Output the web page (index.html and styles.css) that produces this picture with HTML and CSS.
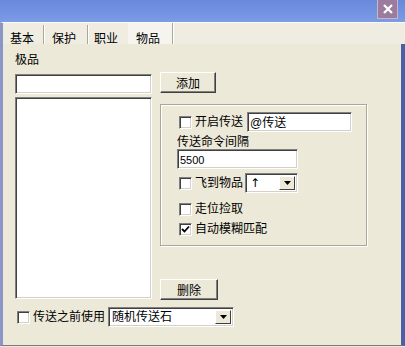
FILE: index.html
```html
<!DOCTYPE html>
<html lang="zh">
<head>
    <meta charset="UTF-8">
    <title>物品</title>
    <link rel="stylesheet" href="styles.css">
</head>
<body>

<div class="window">
    <div class="titlebar">
        <span class="close-btn">
            <svg width="14" height="12" viewBox="0 0 14 12"><path d="M3 2 L11 10 M11 2 L3 10" stroke="#fff" stroke-width="2.2"/></svg>
        </span>
    </div>

    <div class="tabs">
        <span class="tab tab-1">基本</span>
        <span class="tab tab-2">保护</span>
        <span class="tab tab-3">职业</span>
        <span class="tab tab-4 active">物品</span>
    </div>

    <div class="panel">
        <div class="label">极品</div>

        <div class="main">
            <div class="left-col">
                <div class="edit item-input"></div>
                <div class="edit item-list"></div>
            </div>

            <div class="right-col">
                <button class="btn btn-add">添加</button>

                <div class="group">
                    <div class="row">
                        <span class="check"></span>
                        <span class="check-text">开启传送</span>
                        <div class="edit cmd-input">@传送</div>
                    </div>
                    <div class="sub-label">传送命令间隔</div>
                    <div class="edit interval-input">5500</div>
                    <div class="row row-fly">
                        <span class="check"></span>
                        <span class="check-text">飞到物品</span>
                        <div class="combo fly-combo">
                            <span class="combo-value arrow-value">&#x2191;&#xFE0E;</span>
                            <span class="combo-arrow"><svg width="7" height="4" viewBox="0 0 7 4"><path d="M0 0 H7 L3.5 4 Z" fill="#000"/></svg></span>
                        </div>
                    </div>
                    <div class="row row-walk">
                        <span class="check"></span>
                        <span class="check-text">走位捡取</span>
                    </div>
                    <div class="row">
                        <span class="check">
                            <svg width="9" height="9" viewBox="0 0 9 9"><path d="M1 4 L3.5 6.5 L8 1.5" stroke="#000" stroke-width="1.8" fill="none"/></svg>
                        </span>
                        <span class="check-text">自动模糊匹配</span>
                    </div>
                </div>

                <button class="btn btn-delete">删除</button>
            </div>
        </div>

        <div class="bottom-row">
            <span class="check"></span>
            <span class="check-text">传送之前使用</span>
            <div class="combo stone-combo">
                <span class="combo-value">随机传送石</span>
                <span class="combo-arrow"><svg width="7" height="4" viewBox="0 0 7 4"><path d="M0 0 H7 L3.5 4 Z" fill="#000"/></svg></span>
            </div>
        </div>
    </div>
</div>

</body>
</html>
```

FILE: styles.css
```css
body {
    margin: 0;
    background: #ece9d8;
    font-family: "Liberation Sans", "Noto Sans CJK SC", sans-serif;
    font-size: 12px;
    color: #000;
}

.window {
    width: 405px;
    height: 346px;
    display: flex;
    flex-direction: column;
}

.titlebar {
    height: 22px;
    flex: none;
    background: linear-gradient(#6888dc, #7c9ce6);
    display: flex;
    justify-content: flex-end;
    align-items: flex-start;
    padding-right: 7px;
}

.close-btn {
    width: 19px;
    height: 18px;
    background: #9c7c9c;
    border: 1px solid #c8b4cc;
    border-top: none;
    display: flex;
    align-items: center;
    justify-content: center;
}

.tabs {
    height: 22px;
    flex: none;
    display: flex;
    background: #efece2;
    border-top: 1px solid #fbfaf6;
    border-left: 3px solid #8a96c6;
    box-sizing: border-box;
}

.tab {
    padding-top: 7px;
    line-height: 14px;
    border-right: 1px solid #aca899;
    box-shadow: 1px 0 0 #fff;
    margin-top: 2px;
}
.tab-1 { padding-left: 7px; width: 33px; }
.tab-2 { padding-left: 8px; width: 35px; }
.tab-3 { padding-left: 6px; width: 34px; border-right: none; box-shadow: none; }
.tab-4 { padding-left: 8px; width: 36px; }

.tab.active {
    background: #f6f4ee;
    margin-top: 0;
    padding-top: 9px;
}

.panel {
    flex: 1;
    border-left: 3px solid #8a96c6;
    border-right: 4px solid #4c5ea8;
    border-bottom: 1px solid #7a7a7a;
    padding: 9px 0 0 12px;
}

.label {
    height: 14px;
    line-height: 14px;
    margin-bottom: 6px;
}

.main {
    display: flex;
    gap: 8px;
}

.left-col {
    width: 137px;
    display: flex;
    flex-direction: column;
    gap: 3px;
    margin-top: 1px;
}

.edit {
    background: #fff;
    border: 1px solid;
    border-color: #808080 #fff #fff #808080;
    box-shadow: inset 1px 1px #404040, inset -1px -1px #d4d0c8;
    box-sizing: border-box;
    line-height: 16px;
    padding: 2px 2px 0;
    white-space: nowrap;
}

.item-input { height: 20px; }
.item-list { height: 202px; }

.right-col {
    width: 207px;
    display: flex;
    flex-direction: column;
    align-items: flex-start;
}

.btn {
    font: inherit;
    color: #000;
    background: #ece9d8;
    border: 1px solid;
    border-color: #fff #404040 #404040 #fff;
    box-shadow: inset -1px -1px #808080;
    height: 21px;
    padding: 0;
}
.btn-add { width: 56px; margin-top: -1px; }
.btn-delete { width: 58px; margin-top: 33px; }

.group {
    width: 207px;
    height: 142px;
    box-sizing: border-box;
    margin-top: 11px;
    border: 1px solid #aca899;
    box-shadow: inset 1px 1px #fff, 1px 1px #fff;
    padding: 7px 0 0 16px;
}

.row {
    height: 20px;
    display: flex;
    align-items: center;
}

.check {
    width: 13px;
    height: 13px;
    box-sizing: border-box;
    background: #fff;
    border: 1px solid;
    border-color: #808080 #fff #fff #808080;
    box-shadow: inset 1px 1px #404040, inset -1px -1px #d4d0c8;
    margin-left: 2px;
    margin-right: 3px;
    display: flex;
    align-items: center;
    justify-content: center;
    flex: none;
}

.check-text {
    line-height: 14px;
    white-space: nowrap;
}

.cmd-input {
    width: 105px;
    height: 20px;
    margin-left: 4px;
}

.sub-label {
    height: 14px;
    line-height: 14px;
    margin-top: 3px;
}

.interval-input {
    width: 121px;
    height: 20px;
    font-size: 11px;
}

.row-fly { margin-top: 4px; }
.row-walk { margin-top: 6px; }

.combo {
    display: flex;
    height: 20px;
    background: #fff;
    border: 1px solid;
    border-color: #808080 #fff #fff #808080;
    box-shadow: inset 1px 1px #404040, inset -1px -1px #d4d0c8;
    box-sizing: border-box;
    padding: 2px;
}

.combo-value {
    flex: 1;
    line-height: 15px;
    padding-left: 1px;
    white-space: nowrap;
}

.arrow-value {
    font-family: "DejaVu Sans", sans-serif;
    font-size: 12px;
    padding-left: 2px;
}

.combo-arrow {
    width: 16px;
    background: #ece9d8;
    border: 1px solid;
    border-color: #fff #404040 #404040 #fff;
    box-sizing: border-box;
    display: flex;
    align-items: center;
    justify-content: center;
}

.fly-combo {
    width: 53px;
    margin-left: 2px;
}

.bottom-row {
    display: flex;
    align-items: center;
    height: 20px;
    margin-top: 7px;
}

.bottom-row .check { margin-left: 2px; }
.bottom-row .check-text { margin-right: 3px; }

.stone-combo {
    width: 126px;
}
```
